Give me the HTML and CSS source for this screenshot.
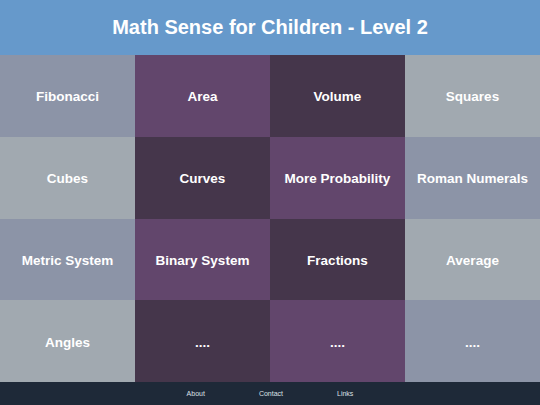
FILE: index.html
```html
<!DOCTYPE html>
<html>
<head>
<meta charset="utf-8">
<link rel="stylesheet" href="styles.css">
</head>
<body>
<header class="top">Math Sense for Children - Level 2</header>
<main class="grid">
  <div class="cell c-blue">Fibonacci</div>
  <div class="cell c-purple">Area</div>
  <div class="cell c-dark">Volume</div>
  <div class="cell c-gray">Squares</div>
  <div class="cell c-gray">Cubes</div>
  <div class="cell c-dark">Curves</div>
  <div class="cell c-purple">More Probability</div>
  <div class="cell c-blue">Roman Numerals</div>
  <div class="cell c-blue">Metric System</div>
  <div class="cell c-purple">Binary System</div>
  <div class="cell c-dark">Fractions</div>
  <div class="cell c-gray">Average</div>
  <div class="cell c-gray">Angles</div>
  <div class="cell c-dark">....</div>
  <div class="cell c-purple">....</div>
  <div class="cell c-blue">....</div>
</main>
<footer class="foot">
  <a class="link">About</a>
  <a class="link">Contact</a>
  <a class="link">Links</a>
</footer>
</body>
</html>
```
FILE: styles.css
```css
html, body {
  margin: 0;
  padding: 0;
}
body {
  width: 540px;
  height: 405px;
  overflow: hidden;
  font-family: "Liberation Sans", Arial, sans-serif;
  display: flex;
  flex-direction: column;
}
.top {
  height: 55px;
  flex: none;
  background: #6699cb;
  color: #ffffff;
  font-weight: bold;
  font-size: 20px;
  display: flex;
  align-items: center;
  justify-content: center;
  padding-bottom: 1px;
  box-sizing: border-box;
}
.grid {
  height: 327px;
  flex: none;
  display: grid;
  grid-template-columns: repeat(4, 1fr);
  grid-template-rows: repeat(4, 1fr);
}
.cell {
  display: flex;
  align-items: center;
  justify-content: center;
  color: #ffffff;
  font-weight: bold;
  font-size: 13.5px;
  padding-top: 2px;
}
.c-blue { background: #8c94a7; }
.c-gray { background: #a1a9b0; }
.c-purple { background: #62466c; }
.c-dark { background: #45364b; }
.foot {
  flex: 1;
  background: #1e2938;
  display: flex;
  justify-content: center;
  align-items: center;
  gap: 54px;
  padding-bottom: 1px;
}
.link {
  color: #dde0e5;
  font-size: 7px;
}
```
